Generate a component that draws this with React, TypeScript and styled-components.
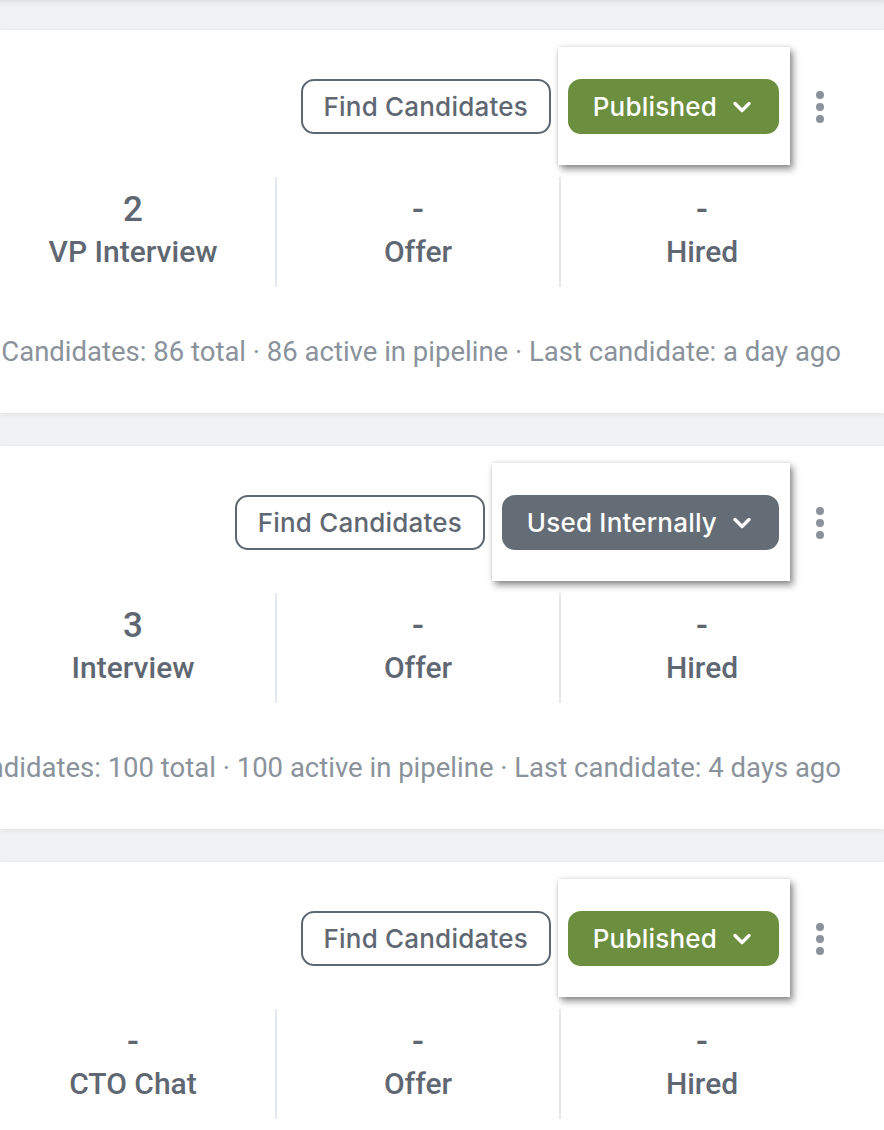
import React from 'react';
import styled, { createGlobalStyle, css } from 'styled-components';

type Status = 'published' | 'internal';

interface Stage {
  count: string;
  label: string;
}

interface Job {
  id: number;
  status: Status;
  stages: Stage[];
  summary: string;
}

const jobs: Job[] = [
  {
    id: 1,
    status: 'published',
    stages: [
      { count: '2', label: 'VP Interview' },
      { count: '-', label: 'Offer' },
      { count: '-', label: 'Hired' },
    ],
    summary: 'Candidates: 86 total · 86 active in pipeline · Last candidate: a day ago',
  },
  {
    id: 2,
    status: 'internal',
    stages: [
      { count: '3', label: 'Interview' },
      { count: '-', label: 'Offer' },
      { count: '-', label: 'Hired' },
    ],
    summary: 'Candidates: 100 total · 100 active in pipeline · Last candidate: 4 days ago',
  },
  {
    id: 3,
    status: 'published',
    stages: [
      { count: '-', label: 'CTO Chat' },
      { count: '-', label: 'Offer' },
      { count: '-', label: 'Hired' },
    ],
    summary: 'Candidates: 12 total · 12 active in pipeline · Last candidate: 2 days ago',
  },
];

const statusLabel: Record<Status, string> = {
  published: 'Published',
  internal: 'Used Internally',
};

const App = () => {
  return (
    <>
      <GlobalStyle />
      <Page>
        {jobs.map((job) => (
          <JobCard key={job.id}>
            <Header>
              <OutlineButton>Find Candidates</OutlineButton>
              <Spotlight>
                <StatusButton status={job.status}>
                  {statusLabel[job.status]}
                  <Chevron />
                </StatusButton>
              </Spotlight>
              <MoreButton aria-label="More">
                <Dot />
                <Dot />
                <Dot />
              </MoreButton>
            </Header>
            <Stages>
              {job.stages.map((stage, i) => (
                <StageCol key={i} first={i === 0}>
                  <StageCount>{stage.count}</StageCount>
                  <StageLabel>{stage.label}</StageLabel>
                </StageCol>
              ))}
            </Stages>
            <Summary>
              <span>{job.summary}</span>
            </Summary>
          </JobCard>
        ))}
      </Page>
    </>
  );
};

export default App;

const Chevron = () => (
  <svg width="20" height="12" viewBox="0 0 20 12" fill="none">
    <path
      d="M3 2.5 L10 9.5 L17 2.5"
      stroke="#fff"
      strokeWidth="3.4"
      strokeLinecap="round"
      strokeLinejoin="round"
    />
  </svg>
);

const GlobalStyle = createGlobalStyle`
  html, body {
    margin: 0;
    padding: 0;
    background: #f1f2f4;
    overflow: hidden;
  }
  * {
    box-sizing: border-box;
  }
`;

const Page = styled.div`
  width: 884px;
  height: 1130px;
  overflow: hidden;
  padding-top: 30px;
  display: flex;
  flex-direction: column;
  gap: 33px;
  background: #f1f2f4;
  box-shadow: inset 0 7px 6px -5px rgba(0, 0, 0, 0.09);
  font-family: Roboto, 'Liberation Sans', sans-serif;
`;

const JobCard = styled.section`
  flex-shrink: 0;
  background: #fff;
  height: 383px;
  box-shadow: 0 2px 5px rgba(0, 0, 0, 0.06), 0 -1px 2px rgba(0, 0, 0, 0.03);
  display: flex;
  flex-direction: column;
`;

const Header = styled.div`
  display: flex;
  justify-content: flex-end;
  align-items: center;
  padding: 49px 44px 0 0;
  height: 104px;
`;

const buttonBase = css`
  font-family: Inter, 'Liberation Sans', sans-serif;
  font-weight: 500;
  font-size: 26px;
  letter-spacing: 0.2px;
  height: 55px;
  border-radius: 13px;
  cursor: pointer;
  display: flex;
  align-items: center;
  white-space: nowrap;
`;

const OutlineButton = styled.button`
  ${buttonBase};
  width: 250px;
  justify-content: center;
  background: #fff;
  color: #5f6872;
  border: 2px solid #5f6872;
  margin-right: 17px;
`;

const Spotlight = styled.div`
  position: relative;
  z-index: 2;
  background: #fff;
  padding: 32px 11px 31px 10px;
  margin: -32px -11px -31px -10px;
  box-shadow: 3px 4px 7px rgba(0, 0, 0, 0.45), 0 0 4px rgba(0, 0, 0, 0.12);
`;

const StatusButton = styled.button<{ status: Status }>`
  ${buttonBase};
  border: none;
  color: #fff;
  gap: 15px;
  padding: 0 27px 0 25px;
  background: ${(props) => (props.status === 'published' ? '#6b8f3f' : '#646c76')};
`;

const MoreButton = styled.button`
  width: 40px;
  height: 40px;
  margin-left: 21px;
  border: none;
  background: none;
  padding: 0;
  display: flex;
  flex-direction: column;
  align-items: center;
  justify-content: center;
  gap: 4px;
  cursor: pointer;
`;

const Dot = styled.span`
  width: 8px;
  height: 8px;
  border-radius: 50%;
  background: #8b929b;
`;

const Stages = styled.div`
  display: grid;
  grid-template-columns: repeat(3, 284px);
  justify-content: end;
  padding-right: 41px;
  margin-top: 43px;
`;

const StageCol = styled.div<{ first: boolean }>`
  height: 110px;
  display: flex;
  flex-direction: column;
  align-items: center;
  padding-top: 14px;
  gap: 7px;
  border-left: ${(props) => (props.first ? 'none' : '2px solid #e3e6ea')};
  color: #5f6872;
`;

const StageCount = styled.div`
  font-size: 35px;
  line-height: 38px;
  font-weight: 500;
`;

const StageLabel = styled.div`
  font-size: 30px;
  line-height: 32px;
  font-weight: 500;
`;

const Summary = styled.div`
  display: flex;
  justify-content: flex-end;
  margin-top: 50px;
  padding-right: 43px;
  white-space: nowrap;
  font-size: 27.5px;
  line-height: 30px;
  color: #8a929b;
`;
